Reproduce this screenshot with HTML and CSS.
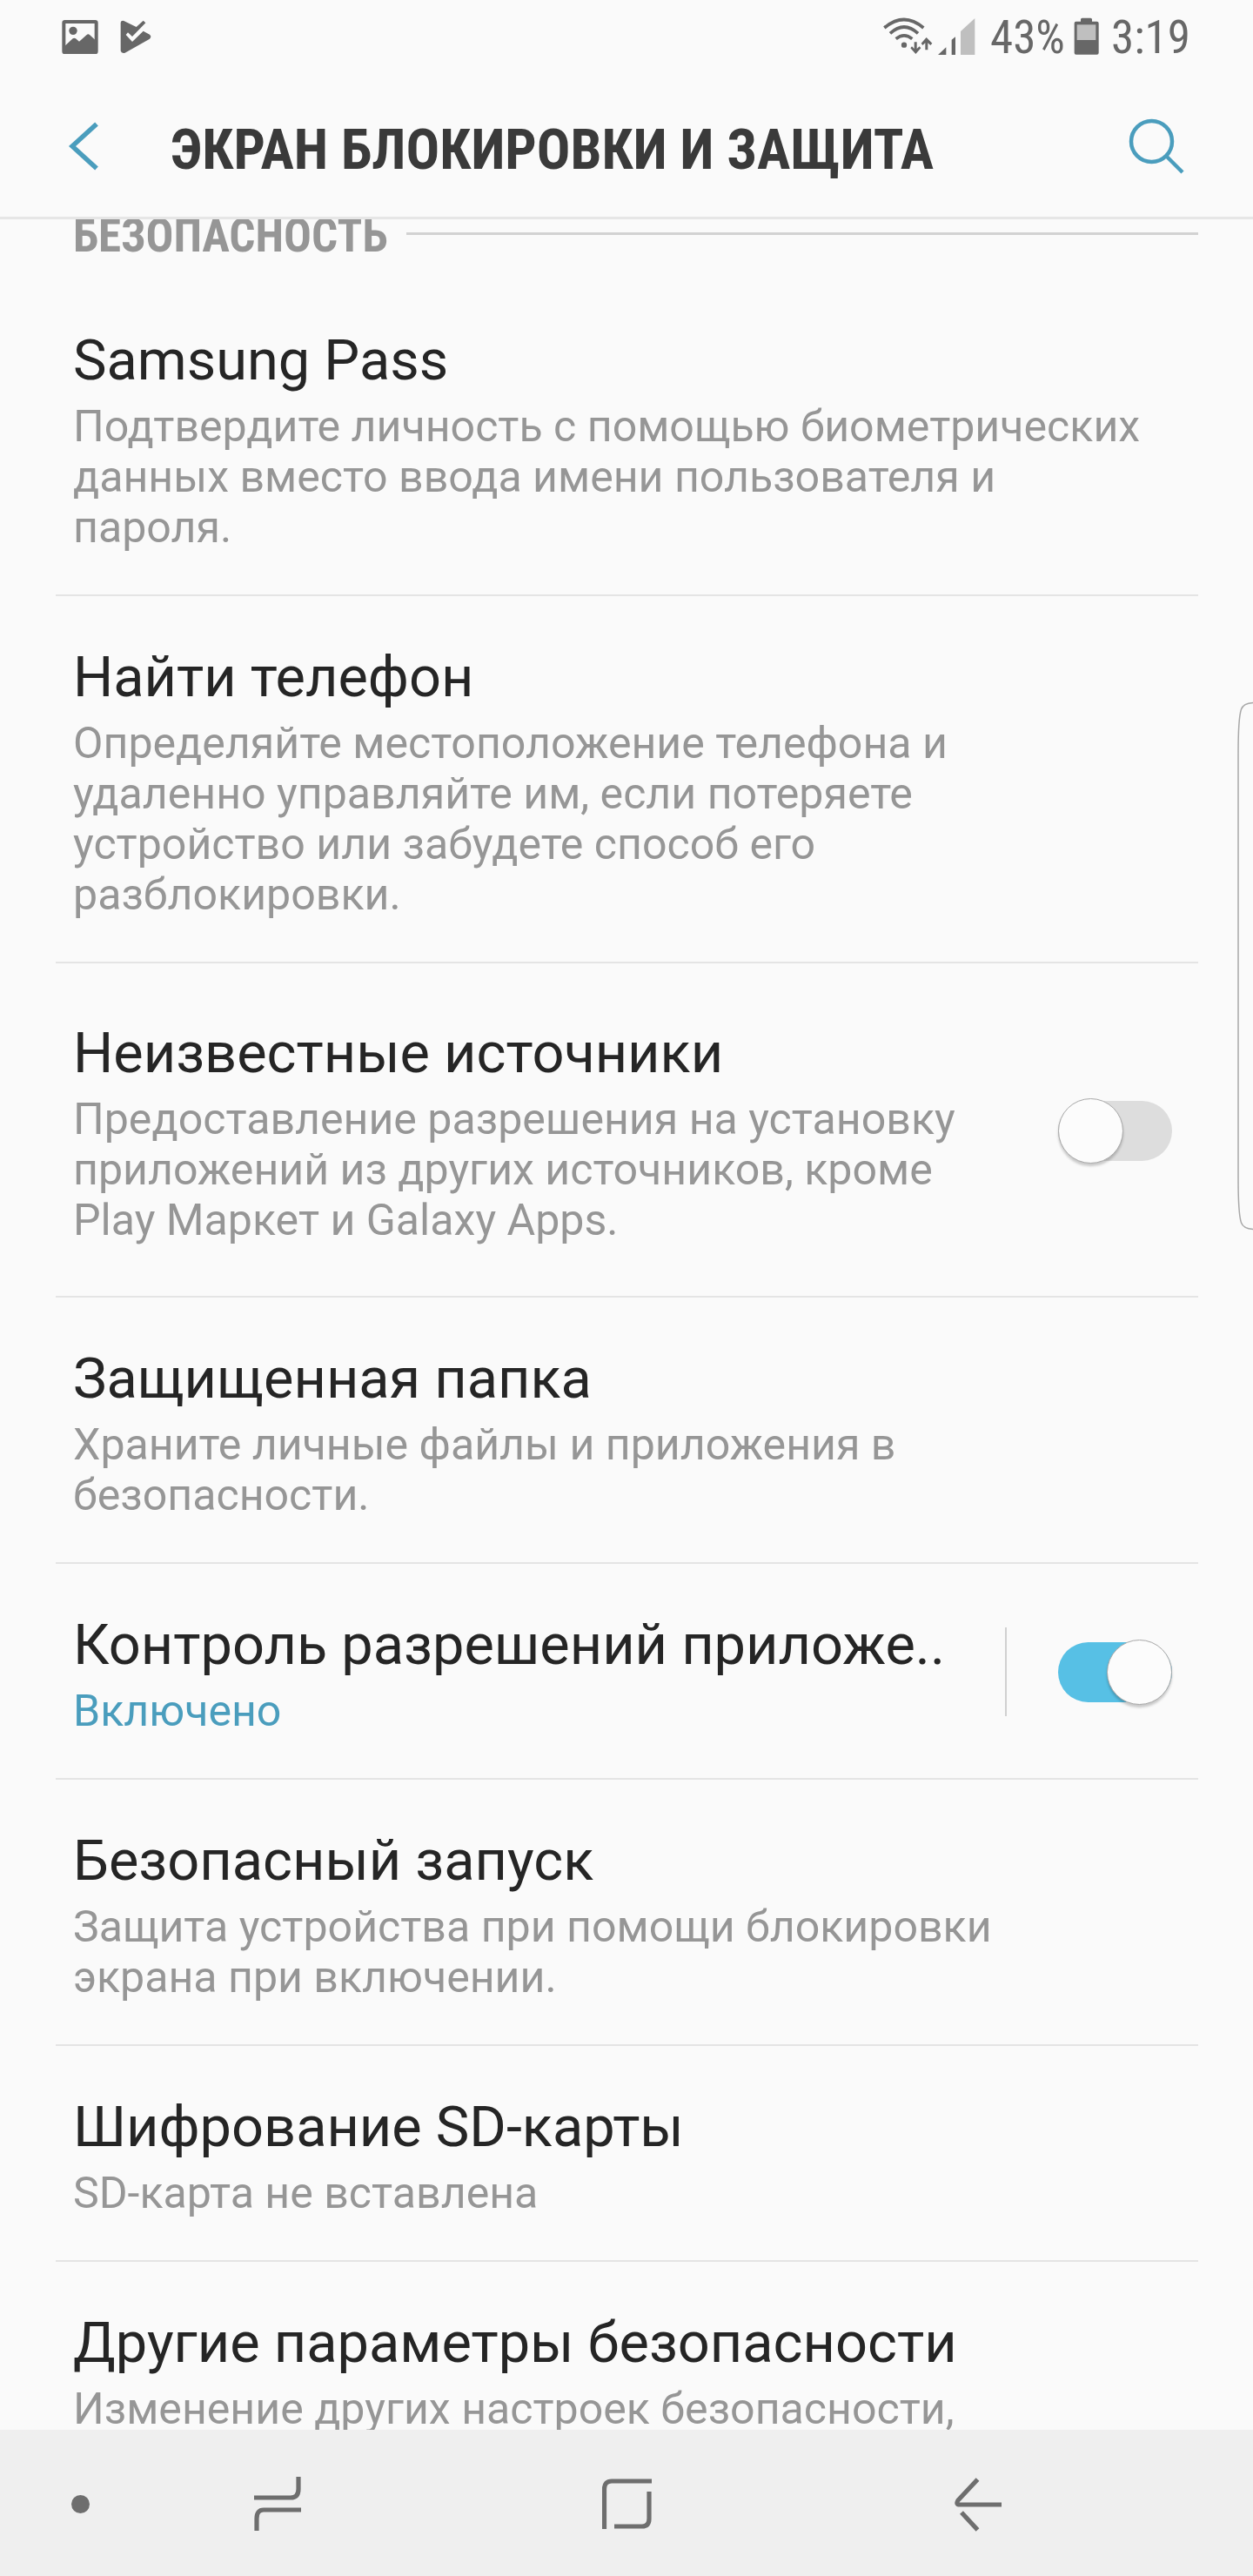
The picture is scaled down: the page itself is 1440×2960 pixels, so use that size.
FILE: index.html
```html
<!DOCTYPE html>
<html lang="ru">

<head>
  <meta charset="UTF-8">
  <title>Экран блокировки и защита</title>
  <link rel="stylesheet" href="styles.css">
</head>

<body>
  <div class="screen">
    <div class="status">
      <svg class="status__picture" width="42" height="40" viewBox="0 0 126 120">
        <rect x="7" y="9" width="112" height="106" rx="4" fill="none" stroke="#676767" stroke-width="12" />
        <circle cx="39" cy="40" r="14" />
        <path d="M7 96 L13 90 L38 67 Q43 64 48 67 L60 77 L86 54 Q91 50 96 54 L119 75 V115 H7z" />
      </svg>
      <svg class="status__play" width="36" height="40" viewBox="0 0 108 120">
        <path d="M2 12 Q3 4 13 6 L56 27 L80 5 L88 13 L42 60 L27 46 L20 54 L42 78 L80 41 L102 53 Q110 60 102 68 L17 116 Q4 119 2 109z" />
      </svg>
      <div class="status__right">
        <svg class="status__wifi" width="57" height="44" viewBox="0 0 171 132">
          <g fill="none" stroke="#676767" stroke-width="11">
            <path d="M4 39 Q72 -18 139 39" />
            <path d="M24 58 Q72 14 120 58" />
            <path d="M44 77 Q72 54 100 77" />
          </g>
          <circle cx="72" cy="98" r="9.500" />
          <path d="M107 88 h9 v23 l9 -8 5 6 -18 20 -18 -20 5 -6 8 8z" />
          <path d="M145 115 h9 v-24 l9 8 6 -7 -20 -20 -18 20 5 7 9 -8z" />
        </svg>
        <svg class="status__signal" width="43" height="43" viewBox="0 0 129 129">
          <path d="M0 129 L28 103 V129z M47 77 L60 67 V129 H47z" />
          <path d="M78 48 L127 3 V129 H78z" fill="#bfbfbf" />
        </svg>
        <span class="status__text status__percent">43%</span>
        <svg class="status__battery" width="29" height="43" viewBox="0 0 87 129">
          <path d="M24 14 V7 Q24 2 29 2 H58 Q63 2 63 7 V14 H80 Q86 14 86 20 V122 Q86 128 80 128 H8 Q2 128 2 122 V20 Q2 14 8 14z" />
          <rect x="11" y="25" width="65" height="53" fill="#bfbfbf" />
        </svg>
        <span class="status__text status__time">3:19</span>
      </div>
    </div>

    <header class="header">
      <svg class="header__back" width="36" height="58" viewBox="0 0 36 58">
        <path d="M32 3.500 L4 29 L32 54.500" fill="none" stroke="#4a9dbd" stroke-width="5.500" />
      </svg>
      <h1 class="header__title">ЭКРАН БЛОКИРОВКИ И ЗАЩИТА</h1>
      <svg class="header__search" width="66" height="66" viewBox="0 0 66 66">
        <g fill="none" stroke="#4a9dbd" stroke-width="4.500">
          <circle cx="27.500" cy="27.500" r="23.500" />
          <path d="M44 44 L63 63" />
        </g>
      </svg>
    </header>

    <main class="list">
      <div class="section">
        <h2 class="section__title">БЕЗОПАСНОСТЬ</h2>
        <div class="section__line"></div>
      </div>

      <div class="item">
        <div class="item__text">
          <h3>Samsung Pass</h3>
          <p>Подтвердите личность с помощью биометрических<br>данных вместо ввода имени пользователя и<br>пароля.</p>
        </div>
      </div>

      <div class="item">
        <div class="item__text">
          <h3>Найти телефон</h3>
          <p>Определяйте местоположение телефона и<br>удаленно управляйте им, если потеряете<br>устройство или забудете способ его<br>разблокировки.</p>
        </div>
      </div>

      <div class="item item--tall">
        <div class="item__text">
          <h3>Неизвестные источники</h3>
          <p>Предоставление разрешения на установку<br>приложений из других источников, кроме<br>Play Маркет и Galaxy Apps.</p>
        </div>
        <div class="switch"><div class="switch__knob"></div></div>
      </div>

      <div class="item">
        <div class="item__text">
          <h3>Защищенная папка</h3>
          <p>Храните личные файлы и приложения в<br>безопасности.</p>
        </div>
      </div>

      <div class="item">
        <div class="item__text">
          <h3>Контроль разрешений приложе..</h3>
          <p class="enabled">Включено</p>
        </div>
        <div class="item__divider"></div>
        <div class="switch switch--on"><div class="switch__knob"></div></div>
      </div>

      <div class="item">
        <div class="item__text">
          <h3>Безопасный запуск</h3>
          <p>Защита устройства при помощи блокировки<br>экрана при включении.</p>
        </div>
      </div>

      <div class="item">
        <div class="item__text">
          <h3>Шифрование SD-карты</h3>
          <p>SD-карта не вставлена</p>
        </div>
      </div>

      <div class="item">
        <div class="item__text">
          <h3>Другие параметры безопасности</h3>
          <p>Изменение других настроек безопасности,</p>
        </div>
      </div>
    </main>

    <nav class="nav">
      <div class="nav__dot"></div>
      <svg class="nav__recents" width="54" height="62" viewBox="0 0 54 62">
        <path d="M51 0 V14 Q51 24 42 24 H0 M54 38 H11 Q3 38 3 48 V62" />
      </svg>
      <svg class="nav__home" width="57" height="58" viewBox="0 0 57 58">
        <path d="M2.500 58 V12 Q2.500 3 11 3 H57 M54 15 V46 Q54 55 46 55 H14" />
      </svg>
      <svg class="nav__back" width="54" height="62" viewBox="0 0 54 62">
        <path d="M26.500 2 L4 26 Q1 31 6 31 H54 M8 40 L26.500 60" />
      </svg>
    </nav>

    <!-- edge panel handle -->
    <svg class="edge" width="19" height="608" viewBox="0 0 19 608">
      <path d="M19 1.500 Q7 2 4.500 9 Q1 19 1 60 V548 Q1 589 4.500 599 Q7 606 19 606.500" fill="none" stroke="#a8a8a8" stroke-width="1.500" />
    </svg>
  </div>
</body>

</html>
```
FILE: styles.css
```css
* {
  margin: 0;
  padding: 0;
  box-sizing: border-box;
}

body {
  background-color: #fafafa;
  font-family: Roboto, "Noto Sans", sans-serif;
}

svg {
  display: block;
  flex: none;
}

.screen {
  position: relative;
  display: flex;
  flex-direction: column;
  width: 1440px;
  height: 2960px;
  overflow: hidden;
}

/* status bar */

.status {
  display: flex;
  height: 84px;
  flex: none;
  padding: 0 75px 0 71px;
  fill: #676767;
}

.status__picture,
.status__play {
  margin-top: 22px;
}

.status__play {
  margin-left: 25px;
}

.status__right {
  display: flex;
  margin-left: auto;
}

.status__wifi {
  margin-top: 19px;
}

.status__signal {
  margin: 20px 0 0 6px;
}

.status__battery {
  margin-top: 20px;
}

.status__text {
  font-family: "Roboto Condensed", Roboto, sans-serif;
  font-stretch: condensed;
  font-size: 53px;
  line-height: 63px;
  color: #676767;
  white-space: nowrap;
}

.status__percent {
  width: 85px;
  margin: 12px 11px 0 17px;
}

.status__time {
  width: 88px;
  margin: 12px 0 0 14px;
}

/* title bar */

.header {
  display: flex;
  height: 168px;
  flex: none;
  padding: 0 78px 0 79px;
  border-bottom: 3px solid #e6e6e6;
}

.header__back {
  margin-top: 55px;
}

.header__title {
  width: 880px;
  margin: 50px 0 0 81px;
  font-family: "Roboto Condensed", Roboto, sans-serif;
  font-stretch: condensed;
  font-size: 64.2px;
  line-height: 76px;
  color: #3a3a3a;
  white-space: nowrap;
}

.header__search {
  margin: 51px 0 0 auto;
}

/* settings list */

.list {
  height: 2540px;
  flex: none;
  padding: 0 63px 0 64px;
  overflow: hidden;
}

.section {
  display: flex;
  height: 69px;
  padding-left: 20px;
}

.section__title {
  width: 383px;
  margin-top: -12px;
  font-family: "Roboto Condensed", Roboto, sans-serif;
  font-stretch: condensed;
  font-size: 53px;
  line-height: 63px;
  color: #969696;
  white-space: nowrap;
}

.section__line {
  flex: 1;
  height: 3px;
  margin-top: 15px;
  background-color: #d2d2d2;
}

.item {
  display: flex;
  align-items: center;
  padding: 50px 30px 48px 20px;
  border-bottom: 2px solid #e4e4e4;
}

.item--tall {
  padding-top: 60px;
  padding-bottom: 58px;
}

.item__text {
  flex: 1;
  padding-top: 4px;
  white-space: nowrap;
}

.item h3 {
  margin-bottom: 8px;
  font-size: 64.9px;
  font-weight: 400;
  line-height: 78px;
  color: #252525;
}

.item p {
  font-size: 50.1px;
  line-height: 58px;
  color: #969696;
}

.item p.enabled {
  color: #4a9dbd;
}

.item__divider {
  width: 2px;
  height: 102px;
  margin-right: 59px;
  background-color: #d0d0d0;
}

.switch {
  display: flex;
  align-items: center;
  flex: none;
  width: 131px;
  height: 69px;
  border-radius: 35px;
  background-color: #dddddd;
}

.switch__knob {
  flex: none;
  width: 75px;
  height: 75px;
  border: 1px solid #a8a8a8;
  border-radius: 50%;
  background-color: #fcfcfc;
  box-shadow: 0 3px 3px #00000033;
}

.switch--on {
  justify-content: flex-end;
  background-color: #57c0e5;
}

/* navigation bar */

.nav {
  display: flex;
  height: 168px;
  flex: none;
  background-color: #efefef;
  fill: none;
  stroke: #6e6e6e;
  stroke-width: 5.2px;
}

.nav__dot {
  width: 21px;
  height: 21px;
  margin: 75px 0 0 82px;
  border-radius: 50%;
  background-color: #6e6e6e;
}

.nav__recents {
  margin: 54px 0 0 189px;
}

.nav__home {
  margin: 56px 0 0 346px;
}

.nav__back {
  margin: 55px 0 0 348px;
}

.edge {
  position: absolute;
  right: -1px;
  top: 806px;
}
```
